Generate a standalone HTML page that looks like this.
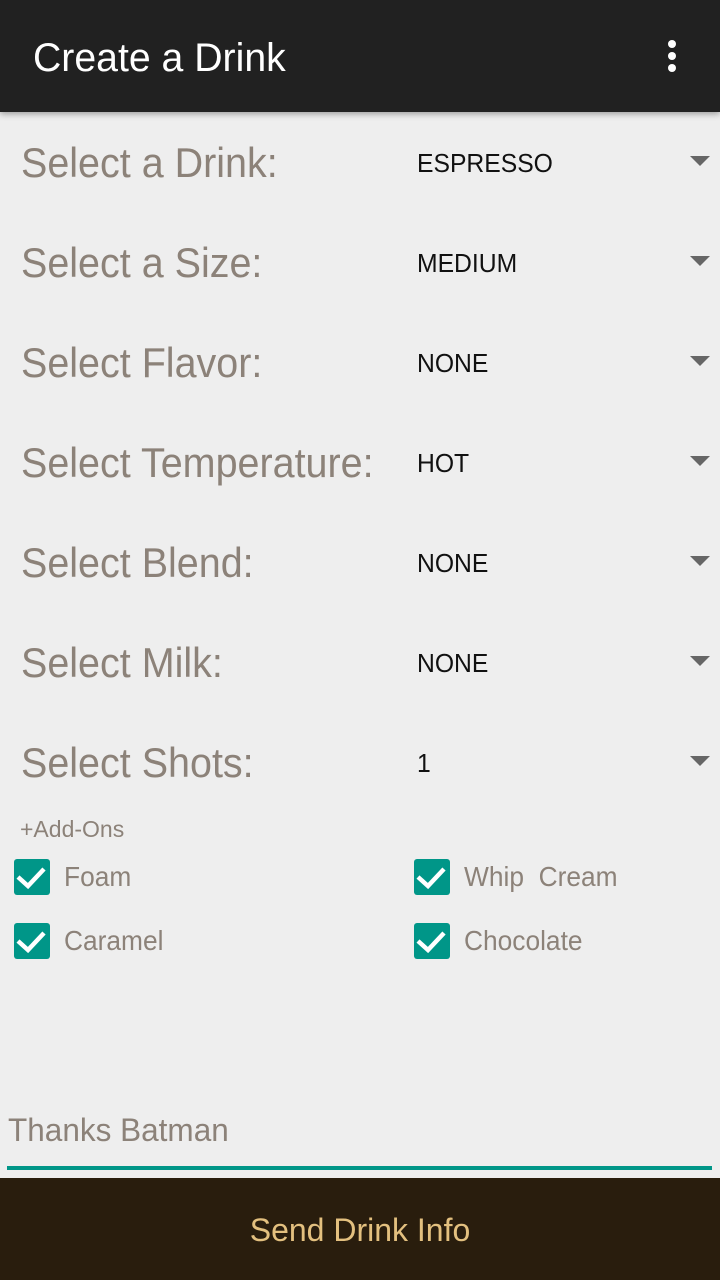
<!DOCTYPE html>
<html><head><meta charset="utf-8"><style>
*{margin:0;padding:0;box-sizing:border-box}
body{width:720px;height:1280px;background:#eeeeee;position:relative;overflow:hidden;font-family:"Liberation Sans",Arial,sans-serif}
.t{position:absolute;white-space:nowrap;line-height:1;transform-origin:0 0}
.hdr{position:absolute;left:0;top:0;width:720px;height:112px;background:#212121;box-shadow:0 2px 6px rgba(0,0,0,.35)}
.dot{position:absolute;left:668px;width:8px;height:8px;border-radius:50%;background:#fff}
.lbl{font-size:42px;color:#8c8279;left:21px;transform:scaleX(.94)}
.val{font-size:26px;color:#111;left:417px;transform:scaleX(.95)}
.arr{position:absolute;left:690px;width:0;height:0;border-left:10px solid transparent;border-right:10px solid transparent;border-top:10px solid #666}
.cb{position:absolute;width:36px;height:36px}
.cl{font-size:28px;color:#8c8279;transform:scaleX(.94)}
</style></head><body>
<div class="hdr"></div>
<div class="t" style="left:33px;top:38px;font-size:40px;color:#fff;transform:scaleX(.98)">Create a Drink</div>
<div class="dot" style="top:40px"></div><div class="dot" style="top:52px"></div><div class="dot" style="top:64px"></div>

<div class="t lbl" style="top:142px">Select a Drink:</div><div class="t val" style="top:150px">ESPRESSO</div><div class="arr" style="top:156px"></div>
<div class="t lbl" style="top:242px">Select a Size:</div><div class="t val" style="top:250px">MEDIUM</div><div class="arr" style="top:256px"></div>
<div class="t lbl" style="top:342px">Select Flavor:</div><div class="t val" style="top:350px">NONE</div><div class="arr" style="top:356px"></div>
<div class="t lbl" style="top:442px">Select Temperature:</div><div class="t val" style="top:450px">HOT</div><div class="arr" style="top:456px"></div>
<div class="t lbl" style="top:542px">Select Blend:</div><div class="t val" style="top:550px">NONE</div><div class="arr" style="top:556px"></div>
<div class="t lbl" style="top:642px">Select Milk:</div><div class="t val" style="top:650px">NONE</div><div class="arr" style="top:656px"></div>
<div class="t lbl" style="top:742px">Select Shots:</div><div class="t val" style="top:750px">1</div><div class="arr" style="top:756px"></div>

<div class="t" style="left:20px;top:818px;font-size:23px;color:#8c8279">+Add-Ons</div>

<svg class="cb" style="left:14px;top:859px" viewBox="0 0 36 36"><rect width="36" height="36" rx="3" fill="#009688"/><path d="M4 18 L14 27 L30 10" stroke="#fff" stroke-width="4.5" fill="none"/></svg>
<div class="t cl" style="left:64px;top:863px">Foam</div>
<svg class="cb" style="left:414px;top:859px" viewBox="0 0 36 36"><rect width="36" height="36" rx="3" fill="#009688"/><path d="M4 18 L14 27 L30 10" stroke="#fff" stroke-width="4.5" fill="none"/></svg>
<div class="t cl" style="left:464px;top:863px">Whip&nbsp; Cream</div>
<svg class="cb" style="left:14px;top:923px" viewBox="0 0 36 36"><rect width="36" height="36" rx="3" fill="#009688"/><path d="M4 18 L14 27 L30 10" stroke="#fff" stroke-width="4.5" fill="none"/></svg>
<div class="t cl" style="left:64px;top:927px">Caramel</div>
<svg class="cb" style="left:414px;top:923px" viewBox="0 0 36 36"><rect width="36" height="36" rx="3" fill="#009688"/><path d="M4 18 L14 27 L30 10" stroke="#fff" stroke-width="4.5" fill="none"/></svg>
<div class="t cl" style="left:464px;top:927px">Chocolate</div>

<div class="t" style="left:8px;top:1114px;font-size:32px;color:#8c8279;transform:scaleX(.985)">Thanks Batman</div>
<div style="position:absolute;left:7px;top:1166px;width:705px;height:4px;background:#009688"></div>

<div style="position:absolute;left:0;top:1178px;width:720px;height:102px;background:#291d0d"></div>
<div class="t" style="left:0;width:720px;text-align:center;top:1214px;font-size:32px;color:#e3c07f">Send Drink Info</div>
</body></html>
